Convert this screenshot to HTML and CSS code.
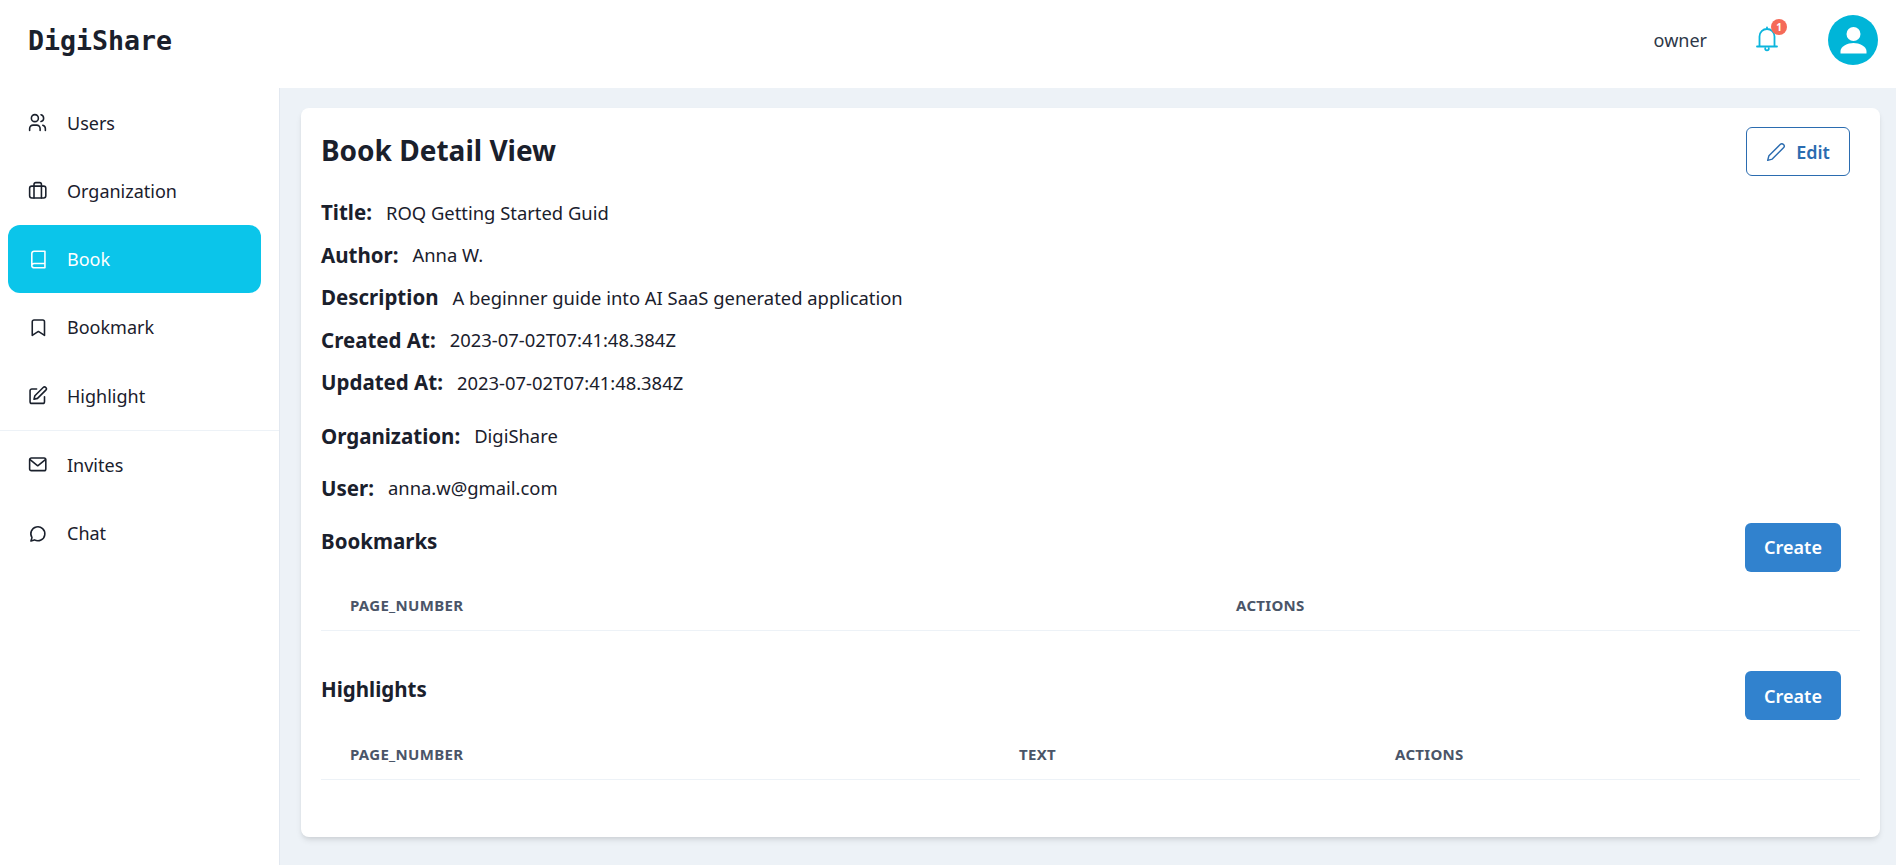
FILE: index.html
```html
<!DOCTYPE html>
<html lang="en">
<head>
<meta charset="utf-8">
<title>Book Detail View</title>
<link rel="stylesheet" href="styles.css">
</head>
<body>
<div class="app">
  <header class="topbar">
    <div class="logo">DigiShare</div>
    <div class="top-right">
      <span class="role">owner</span>
      <div class="bell">
        <svg class="bell-icon" viewBox="0 0 24 28"><path d="M4.500 20V10.500a7.500 7.500 0 0 1 15 0V20M2 20.500H22M12 1.500V3M10.200 22.500a1.800 1.800 0 0 0 3.600 0"/></svg>
        <span class="badge">1</span>
      </div>
      <div class="avatar">
        <svg viewBox="0 0 24 24"><circle cx="12" cy="8" r="4.300"/><path d="M4 20v-1.500C4 15.500 8.500 13.500 12 13.500s8 2 8 5V20z"/></svg>
      </div>
    </div>
  </header>
  <div class="body">
    <aside class="sidebar">
      <nav class="nav">
        <a class="nav-item">
          <svg class="nav-icon" viewBox="0 0 24 24"><circle cx="9" cy="7" r="4"/><path d="M3 21v-2a4 4 0 0 1 4-4h4a4 4 0 0 1 4 4v2"/><path d="M16 3.130a4 4 0 0 1 0 7.750"/><path d="M21 21v-2a4 4 0 0 0-3-3.850"/></svg>
          <span>Users</span>
        </a>
        <a class="nav-item">
          <svg class="nav-icon" viewBox="0 0 24 24"><rect x="3" y="7" width="18.500" height="13.500" rx="2.500"/><path d="M8 20.500V5a2 2 0 0 1 2-2h4.500a2 2 0 0 1 2 2v15.500"/></svg>
          <span>Organization</span>
        </a>
        <a class="nav-item active">
          <svg class="nav-icon" viewBox="0 0 24 24"><path d="M5.500 19V5A2.500 2.500 0 0 1 8 2.500h12.500v19H8A2.500 2.500 0 0 1 5.500 19 2.500 2.500 0 0 1 8 16.500h12.500"/></svg>
          <span>Book</span>
        </a>
        <a class="nav-item">
          <svg class="nav-icon" viewBox="0 0 24 24"><path d="M8 3.500h10a2 2 0 0 1 2 2V21l-7-4.500L6 21V5.500a2 2 0 0 1 2-2z"/></svg>
          <span>Bookmark</span>
        </a>
        <a class="nav-item">
          <svg class="nav-icon" viewBox="0 0 24 24"><path d="M11 4.500H5.500a2 2 0 0 0-2 2V19a2 2 0 0 0 2 2H18a2 2 0 0 0 2-2v-5.500"/><path d="M18.500 2.800a2.100 2.100 0 0 1 3 3L12 15.300l-4 1 1-4z"/></svg>
          <span>Highlight</span>
        </a>
        <div class="nav-divider"></div>
        <a class="nav-item">
          <svg class="nav-icon" viewBox="0 0 24 24"><rect x="3" y="4.500" width="18.500" height="14.500" rx="2"/><path d="M3.500 6.500l8.750 7 8.750-7"/></svg>
          <span>Invites</span>
        </a>
        <a class="nav-item">
          <svg class="nav-icon" viewBox="0 0 24 24"><path d="M4.500 20.500l1.200-3.800A8 8 0 1 1 8.500 19.300z"/></svg>
          <span>Chat</span>
        </a>
      </nav>
    </aside>
    <main class="content">
      <section class="card">
        <div class="card-head">
          <h1 class="page-title">Book Detail View</h1>
          <button class="edit-btn">
            <svg viewBox="0 0 24 24"><path d="M17 3a2.800 2.800 0 0 1 4 4L7.500 20.500 2 22l1.500-5.500z"/></svg>
            <span>Edit</span>
          </button>
        </div>
        <div class="fields">
          <div class="field"><span class="label">Title:</span><span class="value">ROQ Getting Started Guid</span></div>
          <div class="field"><span class="label">Author:</span><span class="value">Anna W.</span></div>
          <div class="field"><span class="label">Description</span><span class="value">A beginner guide into AI SaaS generated application</span></div>
          <div class="field"><span class="label">Created At:</span><span class="value">2023-07-02T07:41:48.384Z</span></div>
          <div class="field"><span class="label">Updated At:</span><span class="value">2023-07-02T07:41:48.384Z</span></div>
          <div class="field relation"><span class="label">Organization:</span><span class="value">DigiShare</span></div>
          <div class="field relation"><span class="label">User:</span><span class="value">anna.w@gmail.com</span></div>
        </div>
        <div class="section-head first">
          <h2 class="section-title">Bookmarks</h2>
          <button class="create-btn">Create</button>
        </div>
        <table class="data-table bookmarks">
          <thead><tr><th>page_number</th><th>actions</th></tr></thead>
        </table>
        <div class="section-head">
          <h2 class="section-title">Highlights</h2>
          <button class="create-btn">Create</button>
        </div>
        <table class="data-table highlights">
          <thead><tr><th>page_number</th><th>text</th><th>actions</th></tr></thead>
        </table>
      </section>
    </main>
  </div>
</div>
</body>
</html>
```
FILE: styles.css
```css
* { box-sizing: border-box; }
html, body { margin: 0; height: 100%; }
body {
  font-family: "Noto Sans", "Open Sans", sans-serif;
  color: #1a202c;
  background: #fff;
  overflow: hidden;
}
.app { display: flex; flex-direction: column; height: 865px; }
.topbar {
  height: 88px;
  flex: none;
  display: flex;
  align-items: center;
  justify-content: space-between;
  padding: 0 18px 8px 28px;
  background: #fff;
}
.logo {
  font-family: "DejaVu Sans Mono", "Liberation Mono", monospace;
  font-weight: 700;
  font-size: 26.600px;
  color: #1a202c;
}
.top-right { display: flex; align-items: center; }
.role { font-size: 18px; color: #2d3748; margin-right: 48px; }
.bell { position: relative; width: 24px; height: 28px; margin-right: 49px; }
.bell-icon {
  display: block;
  width: 24px;
  height: 28px;
  fill: none;
  stroke: #0bb5dd;
  stroke-width: 1.800;
  stroke-linecap: round;
  stroke-linejoin: round;
}
.badge {
  position: absolute;
  top: -7px;
  left: 16px;
  width: 16px;
  height: 16px;
  border-radius: 50%;
  background: #f56a58;
  color: #fff;
  font-size: 10px;
  font-weight: 700;
  line-height: 16px;
  text-align: center;
}
.avatar {
  width: 50px;
  height: 50px;
  border-radius: 50%;
  background: #00b5d8;
  display: flex;
  align-items: center;
  justify-content: center;
}
.avatar svg { width: 39px; height: 39px; fill: #fff; }
.body { flex: 1; min-height: 0; display: flex; }
.sidebar { width: 280px; flex: none; background: #fff; border-right: 1px solid #e2e8f0; }
.nav { display: flex; flex-direction: column; padding-top: .4px; }
.nav-item {
  height: 68.250px;
  margin: 0 18px 0 8px;
  padding-left: 19px;
  display: flex;
  align-items: center;
  gap: 19px;
  font-size: 18px;
  border-radius: 12px;
  color: #1a202c;
}
.nav-item.active { background: #0bc5ea; color: #fff; }
.nav-icon {
  width: 21px;
  height: 21px;
  flex: none;
  fill: none;
  stroke: currentColor;
  stroke-width: 1.800;
  stroke-linecap: round;
  stroke-linejoin: round;
}
.nav-divider { height: 1px; background: #edf2f7; }
.content { flex: 1; min-width: 0; background: #edf2f7; padding: 20px 16px 28px 21px; }
.card {
  height: 729px;
  background: #fff;
  border-radius: 8px;
  padding: 19px 20px 0 20px;
  box-shadow: 0 4px 6px -1px rgba(0,0,0,.1), 0 2px 4px -1px rgba(0,0,0,.06);
}
.card-head { display: flex; align-items: flex-start; justify-content: space-between; padding-right: 10px; height: 64px; }
.page-title { margin: 0; font-size: 28px; font-weight: 700; line-height: 46px; color: #1a202c; }
.edit-btn {
  width: 104px;
  height: 49px;
  display: flex;
  align-items: center;
  justify-content: center;
  gap: 10px;
  background: #fff;
  border: 1px solid #2b6cb0;
  border-radius: 6px;
  color: #2b6cb0;
  font: 600 18px "Noto Sans", sans-serif;
}
.edit-btn svg { width: 20px; height: 20px; fill: none; stroke: currentColor; stroke-width: 1.700; stroke-linejoin: round; }
.fields { display: flex; flex-direction: column; }
.field { height: 42.500px; display: flex; align-items: center; gap: 14px; }
.field.relation { height: 52px; }
.field:nth-child(6) { margin-top: 6px; }
.label { font-size: 20.500px; font-weight: 700; color: #1a202c; }
.value { font-size: 18.400px; color: #1a202c; }
.section-head { display: flex; align-items: flex-start; justify-content: space-between; padding-right: 19px; margin-top: 40px; }
.section-head.first { margin-top: 9px; }
.section-title { margin: 0; font-size: 20.500px; font-weight: 700; line-height: 36px; color: #1a202c; }
.create-btn {
  width: 96px;
  height: 49px;
  background: #3182ce;
  border: 0;
  border-radius: 6px;
  color: #fff;
  font: 600 18px "Noto Sans", sans-serif;
}
.data-table { width: 100%; border-collapse: collapse; table-layout: fixed; }
.data-table th {
  height: 59px;
  padding: 0 29px 15px;
  vertical-align: bottom;
  text-align: left;
  text-transform: uppercase;
  font-size: 15px;
  line-height: 20px;
  font-weight: 700;
  letter-spacing: .3px;
  color: #4a5568;
  border-bottom: 1px solid #edf2f7;
}
.bookmarks th:nth-child(1) { width: 886px; }
.highlights th:nth-child(1) { width: 669px; }
.highlights th:nth-child(2) { width: 376px; }
```
